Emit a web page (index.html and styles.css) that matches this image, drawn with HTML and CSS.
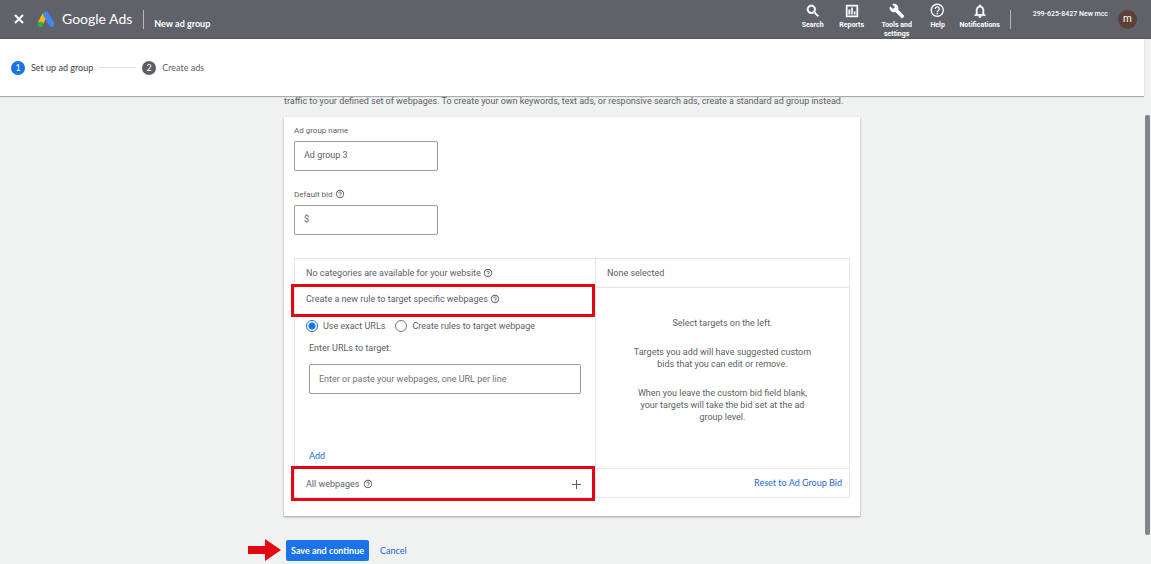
FILE: index.html
```html
<!DOCTYPE html>
<html lang="en">
<head>
<meta charset="utf-8">
<title>New ad group - Google Ads</title>
<link rel="stylesheet" href="styles.css">
</head>
<body>
<svg class="sprite" aria-hidden="true">
  <symbol id="help" viewBox="0 0 24 24"><path d="M11 18h2v-2h-2v2zm1-16C6.480 2 2 6.480 2 12s4.480 10 10 10 10-4.480 10-10S17.520 2 12 2zm0 18c-4.410 0-8-3.590-8-8s3.590-8 8-8 8 3.590 8 8-3.590 8-8 8zm0-14c-2.210 0-4 1.790-4 4h2c0-1.100.9-2 2-2s2 .9 2 2c0 2-3 1.750-3 5h2c0-2.250 3-2.500 3-5 0-2.210-1.790-4-4-4z"/></symbol>
</svg>

<header class="topbar">
  <button class="close" aria-label="Close"><svg class="close-icon" viewBox="0 0 10 10"><path d="M1 1l8 8M9 1L1 9"/></svg></button>
  <svg class="logo" viewBox="0 0 18 17" aria-hidden="true">
    <path d="M8.200 3.200L3.200 12.600" stroke="#fbbc04" stroke-width="5.400"/>
    <path d="M9 3.300l5.600 9.800" stroke="#4285f4" stroke-width="5.600" stroke-linecap="round"/>
    <circle cx="3.300" cy="13.200" r="2.800" fill="#34a853"/>
  </svg>
  <span class="brand">Google Ads</span>
  <span class="divider"></span>
  <h1 class="page-title">New ad group</h1>
  <nav class="tools">
    <button class="tool tool-search"><svg viewBox="0 0 24 24"><path d="M15.500 14h-.79l-.28-.27A6.470 6.470 0 0 0 16 9.500 6.500 6.500 0 1 0 9.500 16c1.610 0 3.090-.59 4.230-1.570l.27.28v.79l5 4.990L20.490 19l-4.990-5zm-6 0C7.010 14 5 11.990 5 9.500S7.010 5 9.500 5 14 7.010 14 9.500 11.990 14 9.500 14z" stroke="#fff"/></svg>Search</button>
    <button class="tool tool-reports"><svg viewBox="0 0 24 24"><path d="M3 3h18v18H3V3zm2 2v14h14V5H5zm2 5h2v7H7v-7zm4-3h2v10h-2V7zm4 6h2v4h-2v-4z" stroke="#fff" stroke-width=".6"/></svg>Reports</button>
    <button class="tool tool-settings"><svg viewBox="0 0 24 24"><path d="M22.700 19l-9.100-9.100c.9-2.300.4-5-1.500-6.900-2-2-5-2.400-7.400-1.300L9 6 6 9 1.600 4.700C.4 7.100.9 10.100 2.900 12.100c1.900 1.900 4.600 2.400 6.900 1.500l9.100 9.100c.4.4 1 .4 1.400 0l2.300-2.300c.5-.4.5-1.100.1-1.400z"/></svg>Tools and settings</button>
    <button class="tool tool-help"><svg viewBox="1 1 22 22"><use href="#help"/></svg>Help</button>
    <button class="tool tool-bell"><svg viewBox="0 0 24 24"><path d="M12 22c1.100 0 2-.9 2-2h-4c0 1.100.9 2 2 2zm6-6v-5c0-3.070-1.630-5.640-4.500-6.320V4a1.500 1.500 0 0 0-3 0v.68C7.640 5.360 6 7.920 6 11v5l-2 2v1h16v-1l-2-2zm-2 1H8v-6c0-2.480 1.510-4.500 4-4.500s4 2.020 4 4.500v6z" stroke="#fff" stroke-width=".7"/></svg>Notifications</button>
  </nav>
  <span class="divider"></span>
  <span class="account">299-625-8427 New mcc</span>
  <button class="avatar">m</button>
</header>

<div class="viewport">
  <ol class="stepper">
    <li class="step current"><span class="num">1</span>Set up ad group</li>
    <li class="line" aria-hidden="true"></li>
    <li class="step"><span class="num">2</span>Create ads</li>
  </ol>

  <main class="content">
    <p class="intro">traffic to your defined set of webpages. To create your own keywords, text ads, or responsive search ads, create a standard ad group instead.</p>
    <section class="card">
      <div class="field">
        <label class="label" for="name">Ad group name</label>
        <input class="box" id="name" type="text" value="Ad group 3">
      </div>
      <div class="field">
        <label class="label" for="bid">Default bid <svg class="hint"><use href="#help"/></svg></label>
        <input class="box" id="bid" type="text" value="$">
      </div>

      <div class="picker">
        <div class="targets">
          <div class="row">No categories are available for your website <svg class="hint"><use href="#help"/></svg></div>
          <div class="row ruled marked">Create a new rule to target specific webpages <svg class="hint"><use href="#help"/></svg></div>
          <div class="radios">
            <label class="choice"><input class="radio" type="radio" name="mode" checked>Use exact URLs</label>
            <label class="choice"><input class="radio" type="radio" name="mode">Create rules to target webpage</label>
          </div>
          <div class="urls">
            <label for="urls">Enter URLs to target:</label>
            <textarea class="box wide" id="urls" rows="1" placeholder="Enter or paste your webpages, one URL per line"></textarea>
            <button class="link add">Add</button>
          </div>
          <div class="row last marked">All webpages <svg class="hint"><use href="#help"/></svg>
            <button class="plus" aria-label="Add all webpages"><svg viewBox="0 0 9 9"><path d="M4.500 0v9M0 4.500h9"/></svg></button>
          </div>
        </div>
        <div class="selection">
          <div class="row ruled">None selected</div>
          <div class="empty">
            <p>Select targets on the left.</p>
            <p>Targets you add will have suggested custom bids that you can edit or remove.</p>
            <p>When you leave the custom bid field blank, your targets will take the bid set at the ad group level.</p>
          </div>
          <div class="reset"><button class="link">Reset to Ad Group Bid</button></div>
        </div>
      </div>
    </section>
    <div class="actions">
      <svg class="arrow" viewBox="0 0 33 22" aria-hidden="true"><path d="M0 7h17V0l16 11-16 11v-7H0z"/></svg>
      <button class="save">Save and continue</button>
      <button class="link">Cancel</button>
    </div>
  </main>
</div>
<div class="thumb"></div>
</body>
</html>
```
FILE: styles.css
```css
* { box-sizing: border-box; }
body {
  margin: 0;
  min-height: 100vh;
  background: #f0f2f2;
  color: #5c5f63;
  font: 9px/12px Roboto, sans-serif;
  overflow: hidden;
}
button { margin: 0; padding: 0; border: 0; background: none; color: inherit; font: inherit; cursor: pointer; }
p, h1, ol { margin: 0; padding: 0; }
.sprite { position: absolute; width: 0; height: 0; }

.topbar {
  display: flex;
  align-items: center;
  height: 39px;
  padding: 0 14px;
  background: #5f6269;
  border-bottom: 1px solid #54575c;
  color: #fff;
}
.close { display: flex; }
.close-icon { width: 10px; height: 10px; fill: none; stroke: #fff; stroke-width: 2; }
.logo { width: 18px; height: 17px; margin-left: 13px; fill: none; }
.brand { margin-left: 7px; font: 14px/20px Lato, sans-serif; }
.divider { width: 1px; height: 19px; background: #b5b7ba; }
.brand + .divider { margin-left: 11px; }
.page-title { margin: 9px 0 0 10px; font: bold 9px/12px Lato, sans-serif; }
.tools { display: flex; align-items: flex-start; align-self: flex-start; margin: 3px 4px 0 auto; }
.tool { display: flex; flex-direction: column; align-items: center; gap: 2px; font: bold 7px/9px Roboto, sans-serif; }
.tool svg { width: 16px; height: 16px; fill: #fff; }
.tool-search { width: 38px; }
.tool-reports { width: 40px; }
.tool-settings { width: 50px; }
.tool-help { width: 32px; }
.tool-bell { width: 52px; }
.account { align-self: flex-start; margin: 8px 10px 0 22px; font: 500 7px/12px Roboto, sans-serif; }
.avatar { width: 19px; height: 19px; border-radius: 50%; background: #5d4037; font: 10px/18px Roboto, sans-serif; }

.viewport { margin-right: 7px; }
.stepper {
  display: flex;
  align-items: center;
  height: 57px;
  padding: 0 11px;
  background: #fff;
  box-shadow: 0 1px 1px #a9adad;
  list-style: none;
}
.step { display: flex; align-items: center; gap: 6px; font: 9px/14px Lato, sans-serif; }
.current { color: #3c4043; }
.num { width: 14px; border-radius: 50%; background: #5c5f63; color: #fff; text-align: center; }
.current .num { background: #1a73e8; }
.line { width: 38px; height: 1px; margin: 0 6px 0 5px; background: #dfe1e3; }

.content { max-width: 576px; margin: 0 auto; }
.intro { padding: 0 0 11px; line-height: 10px; white-space: nowrap; }
.card { padding: 8px 10px 18px; background: #fff; box-shadow: 0 1px 2px #9da0a0; }
.field { display: flex; flex-direction: column; align-items: flex-start; gap: 4px; margin-bottom: 18px; }
.label { font-size: 8px; }
.hint { width: 10px; height: 10px; fill: currentColor; vertical-align: -2px; }
.box {
  display: block;
  width: 144px;
  height: 30px;
  padding: 0 9px 2px;
  border: 1px solid #9a9da1;
  border-radius: 2px;
  background: #fff;
  color: #5c5f63;
  font: 9px/28px Roboto, sans-serif;
  resize: none;
  overflow: hidden;
}
.box::placeholder { color: #6f7276; }
.picker { display: grid; grid-template-columns: 302fr 254fr; min-height: 240px; margin-top: 23px; border: 1px solid #e4e6e7; }
.targets { display: flex; flex-direction: column; border-right: 1px solid #e4e6e7; }
.row { position: relative; padding: 8px 11px; }
.ruled { border-bottom: 1px solid #e4e6e7; }
.targets .ruled { padding: 6px 11px 9px; }
.marked::after { content: ""; position: absolute; inset: -3px 0 -3px -4px; border: 3px solid #e30613; pointer-events: none; }
.radios { display: flex; gap: 10px; padding: 5px 11px 4px; }
.choice { display: flex; align-items: center; gap: 5px; }
.radio { appearance: none; width: 12px; height: 12px; margin: 0; border: 1px solid #74777b; border-radius: 50%; }
.radio:checked { border-color: #1a73e8; background: radial-gradient(#1a73e8 3px, #fff 4px); }
.urls { display: flex; flex: 1; flex-direction: column; align-items: flex-start; padding: 6px 14px; }
.wide { width: 100%; margin-top: 10px; padding-bottom: 0; }
.link { color: #1a67d8; font: 9px/12px Lato, sans-serif; }
.add { margin-top: auto; }
.last { display: flex; align-items: center; padding: 9px 11px 7px; border-top: 1px solid #e4e6e7; }
.last .hint { margin-left: 3px; }
.last::after { bottom: -4px; }
.plus { display: flex; margin: 0 3px 0 auto; }
.plus svg { width: 9px; height: 9px; stroke: #5c5f63; }
.selection { display: flex; flex-direction: column; }
.empty { display: flex; flex: 1; flex-direction: column; gap: 17px; padding: 29px 34px 0; text-align: center; }
.reset { padding: 8px 7px; border-top: 1px solid #e4e6e7; text-align: right; }
.actions { position: relative; display: flex; gap: 11px; align-items: center; padding: 24px 2px 0; }
.arrow { position: absolute; right: 100%; bottom: 0; width: 33px; height: 22px; margin-right: 3px; fill: #e30613; }
.save { padding: 0 5px; border-radius: 2px; background: #1a73e8; color: #fff; font: bold 9px/21px Lato, sans-serif; }
.thumb { position: absolute; top: 115px; right: 1px; width: 5px; height: 420px; border-radius: 2px; background: #80868b; }
```
